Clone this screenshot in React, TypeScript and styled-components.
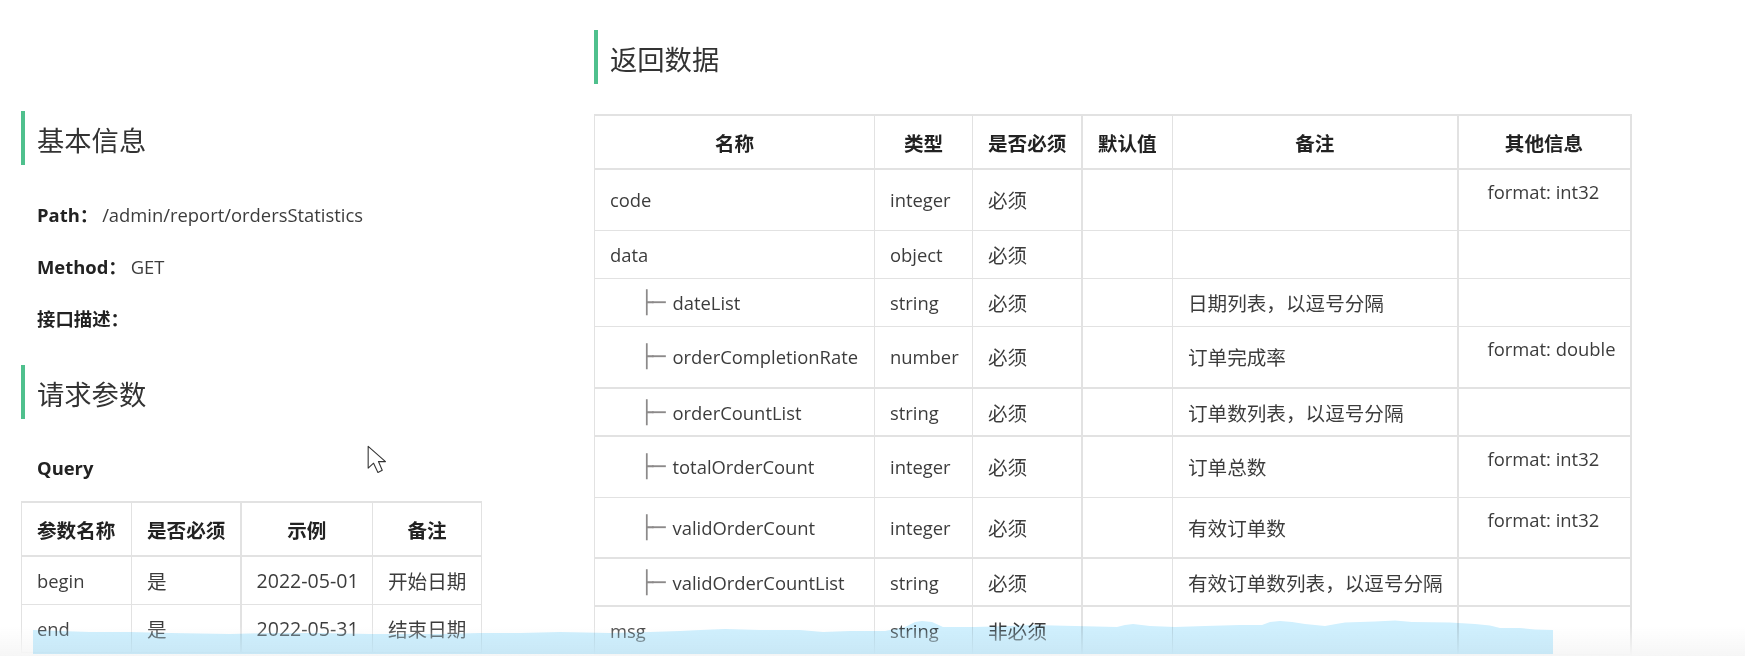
import styled, { createGlobalStyle } from "styled-components";

const GlobalStyle = createGlobalStyle`
  html, body {
    margin: 0;
    padding: 0;
    background: #fff;
  }
  body {
    width: 1745px;
    height: 656px;
    overflow: hidden;
    font-family: "Open Sans", "Noto Sans CJK SC", sans-serif;
    color: #3c3c3c;
  }
`;

const Page = styled.div`
  position: relative;
  display: flex;
  width: 1745px;
  height: 656px;
  overflow: hidden;
  filter: blur(0.35px);
`;

const LeftColumn = styled.div`
  width: 460px;
  margin-left: 21px;
  margin-right: 113px;
  padding-top: 111px;
`;

const RightColumn = styled.div`
  width: 1036px;
  padding-top: 30px;
`;

const SectionTitle = styled.h2`
  display: flex;
  align-items: center;
  height: 54px;
  margin: 0;
  padding-left: 12px;
  padding-top: 1px;
  box-sizing: border-box;
  border-left: 4px solid #4fc08d;
  font-size: 27.3px;
  font-weight: 400;
  font-family: "Noto Sans CJK SC", sans-serif;
  color: #333;
`;

const InfoList = styled.div`
  display: flex;
  flex-direction: column;
  gap: 27px;
  margin: 37px 0 34px 16px;
`;

const InfoRow = styled.div`
  display: flex;
  height: 25px;
  align-items: center;
  font-size: 18.4px;
  line-height: 25px;
`;

const InfoLabel = styled.span`
  font-weight: 700;
  color: #222;
  margin-right: 4px;
`;

const QueryLabel = styled.div`
  margin: 36px 0 21px 16px;
  height: 25px;
  font-size: 18.4px;
  line-height: 25px;
  font-weight: 700;
  color: #222;
`;

const Table = styled.table<{ $width: number }>`
  table-layout: fixed;
  border-collapse: collapse;
  width: ${(p) => p.$width}px;
  font-size: 18.4px;
`;

const RightTableWrap = styled.div`
  margin-top: 30px;
`;

const Row = styled.tr<{ $height: number; $thick?: boolean }>`
  height: ${(p) => p.$height}px;
  border-bottom: ${(p) => (p.$thick ? 2 : 1)}px solid #e2e2e2;
`;

const HeadCell = styled.th<{ $thick?: boolean; $left?: boolean }>`
  padding: 0 15px;
  font-size: 19.6px;
  font-weight: 700;
  color: #222;
  white-space: nowrap;
  text-align: ${(p) => (p.$left ? "left" : "center")};
  border: 1px solid #e2e2e2;
  border-bottom-width: 2px;
  border-top-width: 2px;
  border-right-width: ${(p) => (p.$thick ? 2 : 1)}px;
`;

const Cell = styled.td<{ $thick?: boolean; $top?: boolean; $center?: boolean; $han?: boolean }>`
  padding: ${(p) => (p.$top ? "9px 15px 0" : "0 15px")};
  font-size: ${(p) => (p.$han ? "19.6px" : "18.4px")};
  white-space: nowrap;
  vertical-align: ${(p) => (p.$top ? "top" : "middle")};
  text-align: ${(p) => (p.$center ? "center" : "left")};
  border-left: 1px solid #e2e2e2;
  border-right: ${(p) => (p.$thick ? 2 : 1)}px solid #e2e2e2;
`;

const TreeMark = styled.span`
  margin-left: 30px;
  margin-right: 8px;
  color: #8c8a8a;
  font-family: "DejaVu Sans", sans-serif;
  font-size: 22px;
  letter-spacing: -1px;
`;

const FormatText = styled.span`
  display: block;
  padding-left: 14px;
  font-size: 18.4px;
`;

const BottomShade = styled.div`
  position: absolute;
  left: 0;
  right: 0;
  bottom: 0;
  height: 30px;
  background: linear-gradient(#ffffff00, #f6f6f6);
`;

const Highlight = styled.svg`
  position: absolute;
  left: 0;
  top: 610px;
  mix-blend-mode: multiply;
`;

const Cursor = styled.svg`
  position: absolute;
  left: 366px;
  top: 444px;
`;

const queryRows = [
  { name: "begin", required: "是", example: "2022-05-01", note: "开始日期", height: 48 },
  { name: "end", required: "是", example: "2022-05-31", note: "结束日期", height: 48 },
];

const responseRows = [
  { name: "code", type: "integer", req: "必须", note: "", info: "format: int32", height: 61 },
  { name: "data", type: "object", req: "必须", note: "", info: "", height: 48 },
  { name: "dateList", child: true, type: "string", req: "必须", note: "日期列表\uFF0C以逗号分隔", info: "", height: 48 },
  { name: "orderCompletionRate", child: true, type: "number", req: "必须", note: "订单完成率", info: "format: double", height: 62, thick: true },
  { name: "orderCountList", child: true, type: "string", req: "必须", note: "订单数列表\uFF0C以逗号分隔", info: "", height: 48, thick: true },
  { name: "totalOrderCount", child: true, type: "integer", req: "必须", note: "订单总数", info: "format: int32", height: 61 },
  { name: "validOrderCount", child: true, type: "integer", req: "必须", note: "有效订单数", info: "format: int32", height: 61, thick: true },
  { name: "validOrderCountList", child: true, type: "string", req: "必须", note: "有效订单数列表\uFF0C以逗号分隔", info: "", height: 48, thick: true },
  { name: "msg", type: "string", req: "非必须", note: "", info: "", height: 48 },
];

const wavePoints =
  "33,630 60,631 90,632 130,632 170,633 230,634 270,633 320,633 370,634 400,634 440,634 480,633 520,633 560,632 610,633 650,632 680,631 700,630 725,629 760,630 800,630 823,632 850,631 885,631 905,627 915,622 922,621 932,622 943,627 975,627 1010,626 1033,625 1075,626 1117,627 1125,625 1133,624 1150,626 1175,627 1205,626 1240,625 1262,625 1270,622 1280,621 1292,622 1305,624 1325,626 1336,624 1345,622.5 1375,621.5 1395,620.5 1412,622 1450,622.5 1475,624 1490,625.5 1500,628 1520,628 1535,629.5 1553,630 1553,654 33,654";

const App = () => {
  return (
    <Page>
      <GlobalStyle />
      <LeftColumn>
        <SectionTitle>基本信息</SectionTitle>
        <InfoList>
          <InfoRow>
            <InfoLabel>{"Path\uFF1A"}</InfoLabel>/admin/report/ordersStatistics
          </InfoRow>
          <InfoRow>
            <InfoLabel>{"Method\uFF1A"}</InfoLabel>GET
          </InfoRow>
          <InfoRow>
            <InfoLabel>{"接口描述\uFF1A"}</InfoLabel>
          </InfoRow>
        </InfoList>
        <SectionTitle>请求参数</SectionTitle>
        <QueryLabel>Query</QueryLabel>
        <Table $width={460}>
          <colgroup>
            <col width={110} />
            <col width={109} />
            <col width={132} />
            <col width={109} />
          </colgroup>
          <thead>
            <Row $height={54}>
              <HeadCell $left>参数名称</HeadCell>
              <HeadCell $thick $left>是否必须</HeadCell>
              <HeadCell>示例</HeadCell>
              <HeadCell>备注</HeadCell>
            </Row>
          </thead>
          <tbody>
            {queryRows.map((row) => (
              <Row key={row.name} $height={row.height}>
                <Cell>{row.name}</Cell>
                <Cell $thick $han>{row.required}</Cell>
                <Cell $center $han>{row.example}</Cell>
                <Cell $center $han>{row.note}</Cell>
              </Row>
            ))}
          </tbody>
        </Table>
      </LeftColumn>

      <RightColumn>
        <SectionTitle>返回数据</SectionTitle>
        <RightTableWrap>
          <Table $width={1036}>
            <colgroup>
              <col width={280} />
              <col width={98} />
              <col width={109} />
              <col width={91} />
              <col width={285} />
              <col width={173} />
            </colgroup>
            <thead>
              <Row $height={54}>
                <HeadCell>名称</HeadCell>
                <HeadCell>类型</HeadCell>
                <HeadCell $thick>是否必须</HeadCell>
                <HeadCell>默认值</HeadCell>
                <HeadCell $thick>备注</HeadCell>
                <HeadCell $thick>其他信息</HeadCell>
              </Row>
            </thead>
            <tbody>
              {responseRows.map((row) => (
                <Row key={row.name} $height={row.height} $thick={row.thick}>
                  <Cell>
                    {row.child && <TreeMark>├─</TreeMark>}
                    {row.name}
                  </Cell>
                  <Cell>{row.type}</Cell>
                  <Cell $thick $han>{row.req}</Cell>
                  <Cell />
                  <Cell $thick $han>{row.note}</Cell>
                  <Cell $thick $top={!!row.info}>
                    {row.info && <FormatText>{row.info}</FormatText>}
                  </Cell>
                </Row>
              ))}
            </tbody>
          </Table>
        </RightTableWrap>
      </RightColumn>

      <BottomShade />

      <Highlight width="1745" height="46" viewBox="0 610 1745 46">
        <polygon fill="#d0f0fe" points={wavePoints} />
      </Highlight>

      <Cursor width="26" height="33" viewBox="0 0 24 30">
        <path
          d="M2 2 L2 22 L7 17.5 L11 26 L15 24 L11.5 16 L18 16 Z"
          fill="#fff"
          stroke="#333"
          strokeWidth="1"
          strokeLinejoin="round"
        />
      </Cursor>
    </Page>
  );
};

export default App;
